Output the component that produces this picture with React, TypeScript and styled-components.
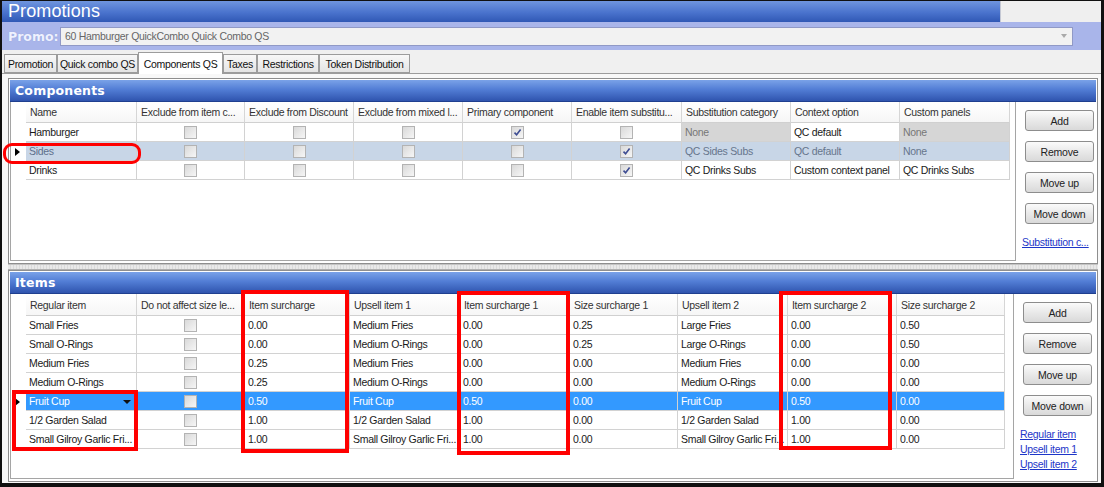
import React from "react";
import styled, { createGlobalStyle } from "styled-components";

const GlobalStyle = createGlobalStyle`
  html, body { margin: 0; padding: 0; }
  body {
    background: #000;
    font-family: "Liberation Sans", Arial, sans-serif;
    font-size: 10.5px;
    letter-spacing: -0.3px;
    color: #222;
  }
  * { box-sizing: border-box; }
`;

const Screen = styled.div`
  position: relative;
  width: 1104px;
  height: 487px;
  background: #101010;
  padding: 1px 3px 4px 2px;
  display: flex;
`;

const Window = styled.div`
  flex: 1;
  display: flex;
  flex-direction: column;
  background: #f7f7f7;
  overflow: hidden;
`;

const TitleBar = styled.div`
  height: 21px;
  flex: none;
  display: flex;
  background: linear-gradient(#6f95de, #4a73cd 55%, #3058b5);
`;

const Title = styled.div`
  flex: 1;
  padding-left: 6px;
  font-size: 18px;
  letter-spacing: 0.1px;
  line-height: 21px;
  color: #fff;
`;

const TitleBlank = styled.div`
  width: 101px;
  background: #efefef;
  border-left: 1px solid #c4c8d4;
`;

const PromoBar = styled.div`
  height: 28px;
  flex: none;
  display: flex;
  align-items: center;
  background: #a9b5ea;
  padding: 0 28px 0 6px;
`;

const PromoLabel = styled.span`
  width: 52px;
  font-family: "DejaVu Sans", sans-serif;
  font-weight: bold;
  font-size: 12.5px;
  letter-spacing: 0;
  color: #eef1ff;
  text-shadow: 0 0 1px #8d9ad0;
`;

const Combo = styled.div`
  flex: 1;
  height: 19px;
  display: flex;
  align-items: center;
  justify-content: space-between;
  padding: 0 5px 0 4px;
  background: #f2f2f2;
  border: 1px solid #9099c6;
  color: #666;
`;

const ComboArrow = styled.span`
  width: 0;
  height: 0;
  border-left: 3px solid transparent;
  border-right: 3px solid transparent;
  border-top: 4px solid #aaa;
`;

const TabStrip = styled.div`
  height: 24px;
  flex: none;
  display: flex;
  align-items: flex-end;
  padding-left: 2px;
  background: #f0f0f0;
  border-bottom: 1px solid #9c9c9c;
`;

const Tab = styled.div<{ $w: number; $active?: boolean }>`
  width: ${(p) => p.$w}px;
  height: ${(p) => (p.$active ? 22 : 19)}px;
  margin-bottom: ${(p) => (p.$active ? -1 : 0)}px;
  border: 1px solid #9c9c9c;
  border-bottom: ${(p) => (p.$active ? "none" : "1px solid #9c9c9c")};
  background: ${(p) => (p.$active ? "#ffffff" : "linear-gradient(#f8f8f8, #e4e4e4)")};
  display: flex;
  align-items: center;
  justify-content: center;
  white-space: nowrap;
  color: #111;
`;

const Content = styled.div`
  flex: 1;
  display: flex;
  flex-direction: column;
  padding: 4px 3px 1px 6px;
  background: #f8f8f8;
`;

const Panel = styled.section<{ $h?: number }>`
  display: flex;
  flex-direction: column;
  border: 1px solid #8e8e8e;
  padding: 1px;
  background: #fff;
  ${(p) => (p.$h ? `height: ${p.$h}px; flex: none;` : `flex: 1;`)}
`;

const PanelHeader = styled.div`
  height: 22px;
  flex: none;
  padding-left: 5px;
  background: linear-gradient(#7aa2e8, #527dd5 45%, #2f54ae);
  border-bottom: 1px solid #1f3f8f;
  color: #fff;
  font-family: "DejaVu Sans", sans-serif;
  font-weight: bold;
  font-size: 12.5px;
  line-height: 21px;
  letter-spacing: 0.2px;
`;

const PanelBody = styled.div`
  flex: 1;
  display: flex;
  min-height: 0;
`;

const GridBox = styled.div<{ $w: number }>`
  width: ${(p) => p.$w}px;
  flex: none;
  margin-bottom: 1px;
  border: 1px solid #a5a5a5;
  border-top: none;
  background: #fff;
  overflow: hidden;
`;

const Row = styled.div<{ $cols: string; $h?: number }>`
  display: grid;
  grid-template-columns: ${(p) => p.$cols};
  height: ${(p) => p.$h ?? 19}px;
`;

const Cell = styled.div<{ $bg?: string; $color?: string; $center?: boolean }>`
  display: flex;
  align-items: center;
  justify-content: ${(p) => (p.$center ? "center" : "space-between")};
  padding: 0 ${(p) => (p.$center ? 0 : 5)}px 0 ${(p) => (p.$center ? 0 : 3)}px;
  border-right: 1px solid #d2d2d2;
  border-bottom: 1px solid #d2d2d2;
  background: ${(p) => p.$bg ?? "transparent"};
  color: ${(p) => p.$color ?? "#1a1a1a"};
  white-space: nowrap;
  overflow: hidden;
`;

const HeadCell = styled.div`
  display: flex;
  align-items: center;
  padding-left: 4px;
  border-right: 1px solid #d6d6d6;
  border-bottom: 1px solid #d0d0d0;
  background: linear-gradient(#ffffff, #f6f6f6);
  color: #333;
  white-space: nowrap;
  overflow: hidden;
`;

const RowHead = styled.div`
  display: flex;
  align-items: center;
  padding-left: 4px;
  background: #fff;
`;

const Pointer = styled.span`
  width: 0;
  height: 0;
  border-top: 4px solid transparent;
  border-bottom: 4px solid transparent;
  border-left: 5px solid #000;
`;

const DropArrow = styled.span`
  width: 0;
  height: 0;
  border-left: 4px solid transparent;
  border-right: 4px solid transparent;
  border-top: 4px solid #111;
  margin-top: 2px;
`;

const Box = styled.span`
  width: 13px;
  height: 13px;
  display: inline-flex;
  align-items: center;
  justify-content: center;
  border: 1px solid #b3b3b3;
  background: linear-gradient(135deg, #d9d9d9, #f6f6f6);
`;

const ButtonCol = styled.div<{ $top: number }>`
  flex: 1;
  display: flex;
  flex-direction: column;
  align-items: flex-start;
  padding: ${(p) => p.$top}px 0 0 6px;
  background: #fff;
`;

const Btn = styled.button`
  width: 69px;
  height: 21px;
  margin: 0 0 10px 3px;
  padding: 0;
  border: 1px solid #8d8d8d;
  border-radius: 3px;
  background: linear-gradient(#fbfbfb, #e9e9e9 50%, #d9d9d9);
  font-family: "Liberation Sans", Arial, sans-serif;
  font-size: 10.5px;
  letter-spacing: -0.2px;
  color: #222;
`;

const LinkList = styled.div`
  display: flex;
  flex-direction: column;
  margin-top: 1px;
`;

const LinkText = styled.a`
  color: #1d36c8;
  text-decoration: underline;
  line-height: 15px;
  white-space: nowrap;
`;

const Splitter = styled.div`
  height: 6px;
  flex: none;
  border-top: 1px solid #c4c4c4;
  border-bottom: 1px solid #b0b0b0;
  background: repeating-linear-gradient(90deg, #e9e9e9 0 2px, #dadada 2px 3px);
`;

const Annot = styled.div<{ $x: number; $y: number; $w: number; $h: number; $r?: number; $t?: number }>`
  position: absolute;
  left: ${(p) => p.$x}px;
  top: ${(p) => p.$y}px;
  width: ${(p) => p.$w}px;
  height: ${(p) => p.$h}px;
  border: ${(p) => p.$t ?? 4}px solid #ff0000;
  border-radius: ${(p) => p.$r ?? 0}px;
  pointer-events: none;
`;

const Check = ({ on }: { on?: boolean }) => (
  <Box>
    {on && (
      <svg width="9" height="9" viewBox="0 0 9 9">
        <path d="M1.5 4.6 L3.6 6.8 L7.6 1.6" fill="none" stroke="#3d4c92" strokeWidth="1.6" />
      </svg>
    )}
  </Box>
);

const compCols = "15px 111px 108px 109px 109px 109px 110px 109px 109px 110px";
const itemCols = "15px 111px 108px 105px 110px 110px 108px 110px 109px 108px";

const compHeads = [
  "Name",
  "Exclude from item c...",
  "Exclude from Discount",
  "Exclude from mixed l...",
  "Primary component",
  "Enable item substitu...",
  "Substitution category",
  "Context option",
  "Custom panels",
];

type CompRow = {
  name: string;
  checks: boolean[];
  cat: string;
  ctx: string;
  custom: string;
  current?: boolean;
  greyCat?: boolean;
  greyCustom?: boolean;
};

const compRows: CompRow[] = [
  { name: "Hamburger", checks: [false, false, false, true, false], cat: "None", ctx: "QC default", custom: "None", greyCat: true, greyCustom: true },
  { name: "Sides", checks: [false, false, false, false, true], cat: "QC Sides Subs", ctx: "QC default", custom: "None", current: true },
  { name: "Drinks", checks: [false, false, false, false, true], cat: "QC Drinks Subs", ctx: "Custom context panel", custom: "QC Drinks Subs" },
];

const itemHeads = [
  "Regular item",
  "Do not affect size le...",
  "Item surcharge",
  "Upsell item 1",
  "Item surcharge 1",
  "Size surcharge 1",
  "Upsell item 2",
  "Item surcharge 2",
  "Size surcharge 2",
];

const itemRows: string[][] = [
  ["Small Fries", "0.00", "Medium Fries", "0.00", "0.25", "Large Fries", "0.00", "0.50"],
  ["Small O-Rings", "0.00", "Medium O-Rings", "0.00", "0.25", "Large O-Rings", "0.00", "0.50"],
  ["Medium Fries", "0.25", "Medium Fries", "0.00", "0.00", "Medium Fries", "0.00", "0.00"],
  ["Medium O-Rings", "0.25", "Medium O-Rings", "0.00", "0.00", "Medium O-Rings", "0.00", "0.00"],
  ["Fruit Cup", "0.50", "Fruit Cup", "0.50", "0.00", "Fruit Cup", "0.50", "0.00"],
  ["1/2 Garden Salad", "1.00", "1/2 Garden Salad", "1.00", "0.00", "1/2 Garden Salad", "1.00", "0.00"],
  ["Small Gilroy Garlic Fri...", "1.00", "Small Gilroy Garlic Fri...", "1.00", "0.00", "Small Gilroy Garlic Fri...", "1.00", "0.00"],
];

const tabs: [string, number][] = [
  ["Promotion", 53],
  ["Quick combo QS", 81],
  ["Components QS", 85],
  ["Taxes", 34],
  ["Restrictions", 62],
  ["Token Distribution", 91],
];

const ComponentsGrid = () => (
  <GridBox $w={1006}>
    <Row $cols={compCols} $h={21}>
      <RowHead />
      {compHeads.map((h) => (
        <HeadCell key={h}>{h}</HeadCell>
      ))}
    </Row>
    {compRows.map((r) => {
      const rowBg = r.current ? "#c8d6e7" : undefined;
      const txt = r.current ? "#66758c" : undefined;
      return (
        <Row key={r.name} $cols={compCols}>
          <RowHead>{r.current && <Pointer />}</RowHead>
          <Cell $bg={rowBg} $color={r.current ? "#5d6f8c" : undefined}>{r.name}</Cell>
          {r.checks.map((c, i) => (
            <Cell key={i} $center $bg={rowBg}>
              <Check on={c} />
            </Cell>
          ))}
          <Cell $bg={r.greyCat ? "#d6d6d6" : rowBg} $color={r.greyCat ? "#777" : txt}>{r.cat}</Cell>
          <Cell $bg={rowBg} $color={txt}>{r.ctx}</Cell>
          <Cell $bg={r.greyCustom ? "#d6d6d6" : rowBg} $color={r.greyCustom ? "#777" : txt}>{r.custom}</Cell>
        </Row>
      );
    })}
  </GridBox>
);

const ItemsGrid = () => (
  <GridBox $w={1004}>
    <Row $cols={itemCols} $h={22}>
      <RowHead />
      {itemHeads.map((h) => (
        <HeadCell key={h}>{h}</HeadCell>
      ))}
    </Row>
    {itemRows.map((r, idx) => {
      const sel = r[0] === "Fruit Cup";
      const bg = sel ? "#3399ff" : undefined;
      const color = sel ? "#ffffff" : undefined;
      return (
        <Row key={idx} $cols={itemCols}>
          <RowHead>{sel && <Pointer />}</RowHead>
          <Cell $bg={bg} $color={color}>
            {r[0]}
            {sel && <DropArrow />}
          </Cell>
          <Cell $center $bg={bg}>
            <Check />
          </Cell>
          {r.slice(1).map((v, i) => (
            <Cell key={i} $bg={bg} $color={color}>
              {v}
            </Cell>
          ))}
        </Row>
      );
    })}
  </GridBox>
);

export default function App() {
  return (
    <>
      <GlobalStyle />
      <Screen>
        <Window>
          <TitleBar>
            <Title>Promotions</Title>
            <TitleBlank />
          </TitleBar>
          <PromoBar>
            <PromoLabel>Promo:</PromoLabel>
            <Combo>
              <span>60 Hamburger QuickCombo Quick Combo QS</span>
              <ComboArrow />
            </Combo>
          </PromoBar>
          <TabStrip>
            {tabs.map(([t, w]) => (
              <Tab key={t} $w={w} $active={t === "Components QS"}>
                {t}
              </Tab>
            ))}
          </TabStrip>
          <Content>
            <Panel $h={186}>
              <PanelHeader>Components</PanelHeader>
              <PanelBody>
                <ComponentsGrid />
                <ButtonCol $top={8}>
                  <Btn>Add</Btn>
                  <Btn>Remove</Btn>
                  <Btn>Move up</Btn>
                  <Btn>Move down</Btn>
                  <LinkList>
                    <LinkText>Substitution c...</LinkText>
                  </LinkList>
                </ButtonCol>
              </PanelBody>
            </Panel>
            <Splitter />
            <Panel>
              <PanelHeader>Items</PanelHeader>
              <PanelBody>
                <ItemsGrid />
                <ButtonCol $top={8}>
                  <Btn>Add</Btn>
                  <Btn>Remove</Btn>
                  <Btn>Move up</Btn>
                  <Btn>Move down</Btn>
                  <LinkList>
                    <LinkText>Regular item</LinkText>
                    <LinkText>Upsell item 1</LinkText>
                    <LinkText>Upsell item 2</LinkText>
                  </LinkList>
                </ButtonCol>
              </PanelBody>
            </Panel>
          </Content>
        </Window>
        <Annot $x={3} $y={143} $w={138} $h={21} $r={9} $t={3} />
        <Annot $x={12} $y={390} $w={126} $h={61} />
        <Annot $x={241} $y={290} $w={108} $h={163} />
        <Annot $x={457} $y={291} $w={113} $h={164} />
        <Annot $x={779} $y={291} $w={113} $h={159} />
      </Screen>
    </>
  );
}
